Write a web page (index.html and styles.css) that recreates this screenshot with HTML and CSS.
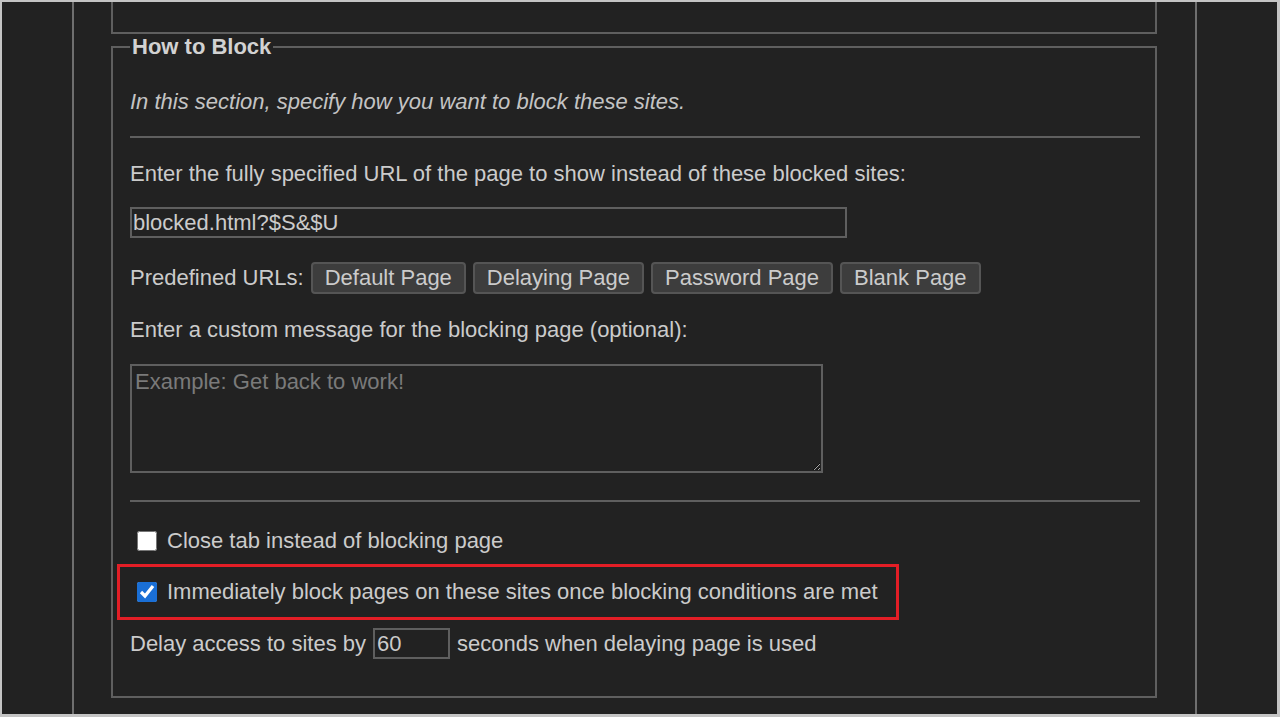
FILE: index.html
```html
<!DOCTYPE html>
<html lang="en">
<head>
<meta charset="utf-8">
<title>How to Block</title>
<link rel="stylesheet" href="styles.css">
</head>
<body>
<div class="frame">
  <div class="column">
    <div class="prev-box"></div>
    <fieldset class="block">
      <legend>How to Block</legend>
      <p class="intro">In this section, specify how you want to block these sites.</p>
      <hr class="sep sep-top">
      <p class="line line-url">Enter the fully specified URL of the page to show instead of these blocked sites:</p>
      <input class="url-input" type="text" value="blocked.html?$S&amp;$U">
      <div class="predef">
        <span class="predef-label">Predefined URLs:</span>
        <button class="btn" type="button">Default Page</button>
        <button class="btn" type="button">Delaying Page</button>
        <button class="btn" type="button">Password Page</button>
        <button class="btn" type="button">Blank Page</button>
      </div>
      <p class="line line-msg">Enter a custom message for the blocking page (optional):</p>
      <textarea class="msg" placeholder="Example: Get back to work!"></textarea>
      <hr class="sep sep-bottom">
      <label class="check check-close"><input type="checkbox"><span>Close tab instead of blocking page</span></label>
      <label class="check check-immediate"><input type="checkbox" checked><span>Immediately block pages on these sites once blocking conditions are met</span></label>
      <div class="delay">
        <span>Delay access to sites by</span>
        <input class="delay-input" type="text" value="60">
        <span>seconds when delaying page is used</span>
      </div>
    </fieldset>
  </div>
</div>
</body>
</html>
```

FILE: styles.css
```css
html, body {
  margin: 0;
  padding: 0;
  background: #222222;
}

.frame {
  width: 1280px;
  height: 717px;
  box-sizing: border-box;
  border-top: 2px solid #c4c4c4;
  border-left: 2px solid #c4c4c4;
  border-right: 3px solid #c4c4c4;
  border-bottom: 3px solid #c4c4c4;
  background: #222222;
  overflow: hidden;
  font-family: "Liberation Sans", Arial, sans-serif;
  font-size: 22px;
  color: #cbcbcb;
}

.column {
  margin-left: 70px;
  width: 1125px;
  height: 100%;
  box-sizing: border-box;
  border-left: 2px solid #6f6f6f;
  border-right: 2px solid #6f6f6f;
}

.prev-box {
  margin-left: 37px;
  width: 1046px;
  height: 32px;
  box-sizing: border-box;
  border: 2px solid #5f5f5f;
  border-top: none;
}

.block {
  margin: 0 0 0 37px;
  width: 1046px;
  height: 664px;
  box-sizing: border-box;
  border: 2px solid #5f5f5f;
  padding: 0 15px 0 17px;
  min-width: 0;
}

.block legend {
  padding: 0 2px;
  font-weight: bold;
  font-size: 22px;
  line-height: 26px;
  color: #d2d2d2;
}

.intro {
  margin: 29px 0 0;
  line-height: 26px;
  font-style: italic;
  color: #c4c4c4;
}

.sep {
  border: none;
  height: 2px;
  background: #5f5f5f;
  margin: 0;
}

.sep-top { margin-top: 21px; }

.line {
  margin: 0;
  line-height: 26px;
}

.line-url { margin-top: 23px; }

.url-input {
  display: block;
  margin-top: 20px;
  width: 717px;
  height: 31px;
  box-sizing: border-box;
  border: 2px solid #5f5f5f;
  background: #222222;
  color: #cbcbcb;
  font: inherit;
  padding: 0 1px;
  outline: none;
}

.predef {
  margin-top: 24px;
  display: flex;
  align-items: center;
  gap: 7px;
  height: 32px;
}

.predef-label { margin-right: 0; }

.btn {
  height: 32px;
  box-sizing: border-box;
  padding: 0 12px;
  border: 2px solid #555555;
  border-radius: 4px;
  background: #3d3d3d;
  color: #cbcbcb;
  font: inherit;
  line-height: 26px;
}

.line-msg { margin-top: 23px; }

.msg {
  display: block;
  margin-top: 21px;
  width: 693px;
  height: 109px;
  box-sizing: border-box;
  border: 2px solid #5f5f5f;
  background: #222222;
  color: #cbcbcb;
  font: inherit;
  padding: 3px 3px;
  resize: both;
  outline: none;
}

.msg::placeholder { color: #7a7a7a; }

.sep-bottom { margin-top: 27px; }

.check {
  display: flex;
  align-items: center;
  line-height: 26px;
}

.check input {
  width: 20px;
  height: 20px;
  margin: 0 10px 0 0;
  accent-color: #1a6fd6;
}

.check-close {
  margin-top: 26px;
  padding-left: 7px;
}

.check-immediate {
  margin: 10px 0 0 -13px;
  width: 782px;
  height: 56px;
  box-sizing: border-box;
  border: 3px solid #e31e26;
  padding-left: 17px;
}

.delay {
  margin-top: 8px;
  display: flex;
  align-items: center;
  gap: 7px;
  line-height: 26px;
}

.delay-input {
  width: 77px;
  height: 31px;
  box-sizing: border-box;
  border: 2px solid #5f5f5f;
  background: #222222;
  color: #cbcbcb;
  font: inherit;
  padding: 0 2px;
  outline: none;
}
```
